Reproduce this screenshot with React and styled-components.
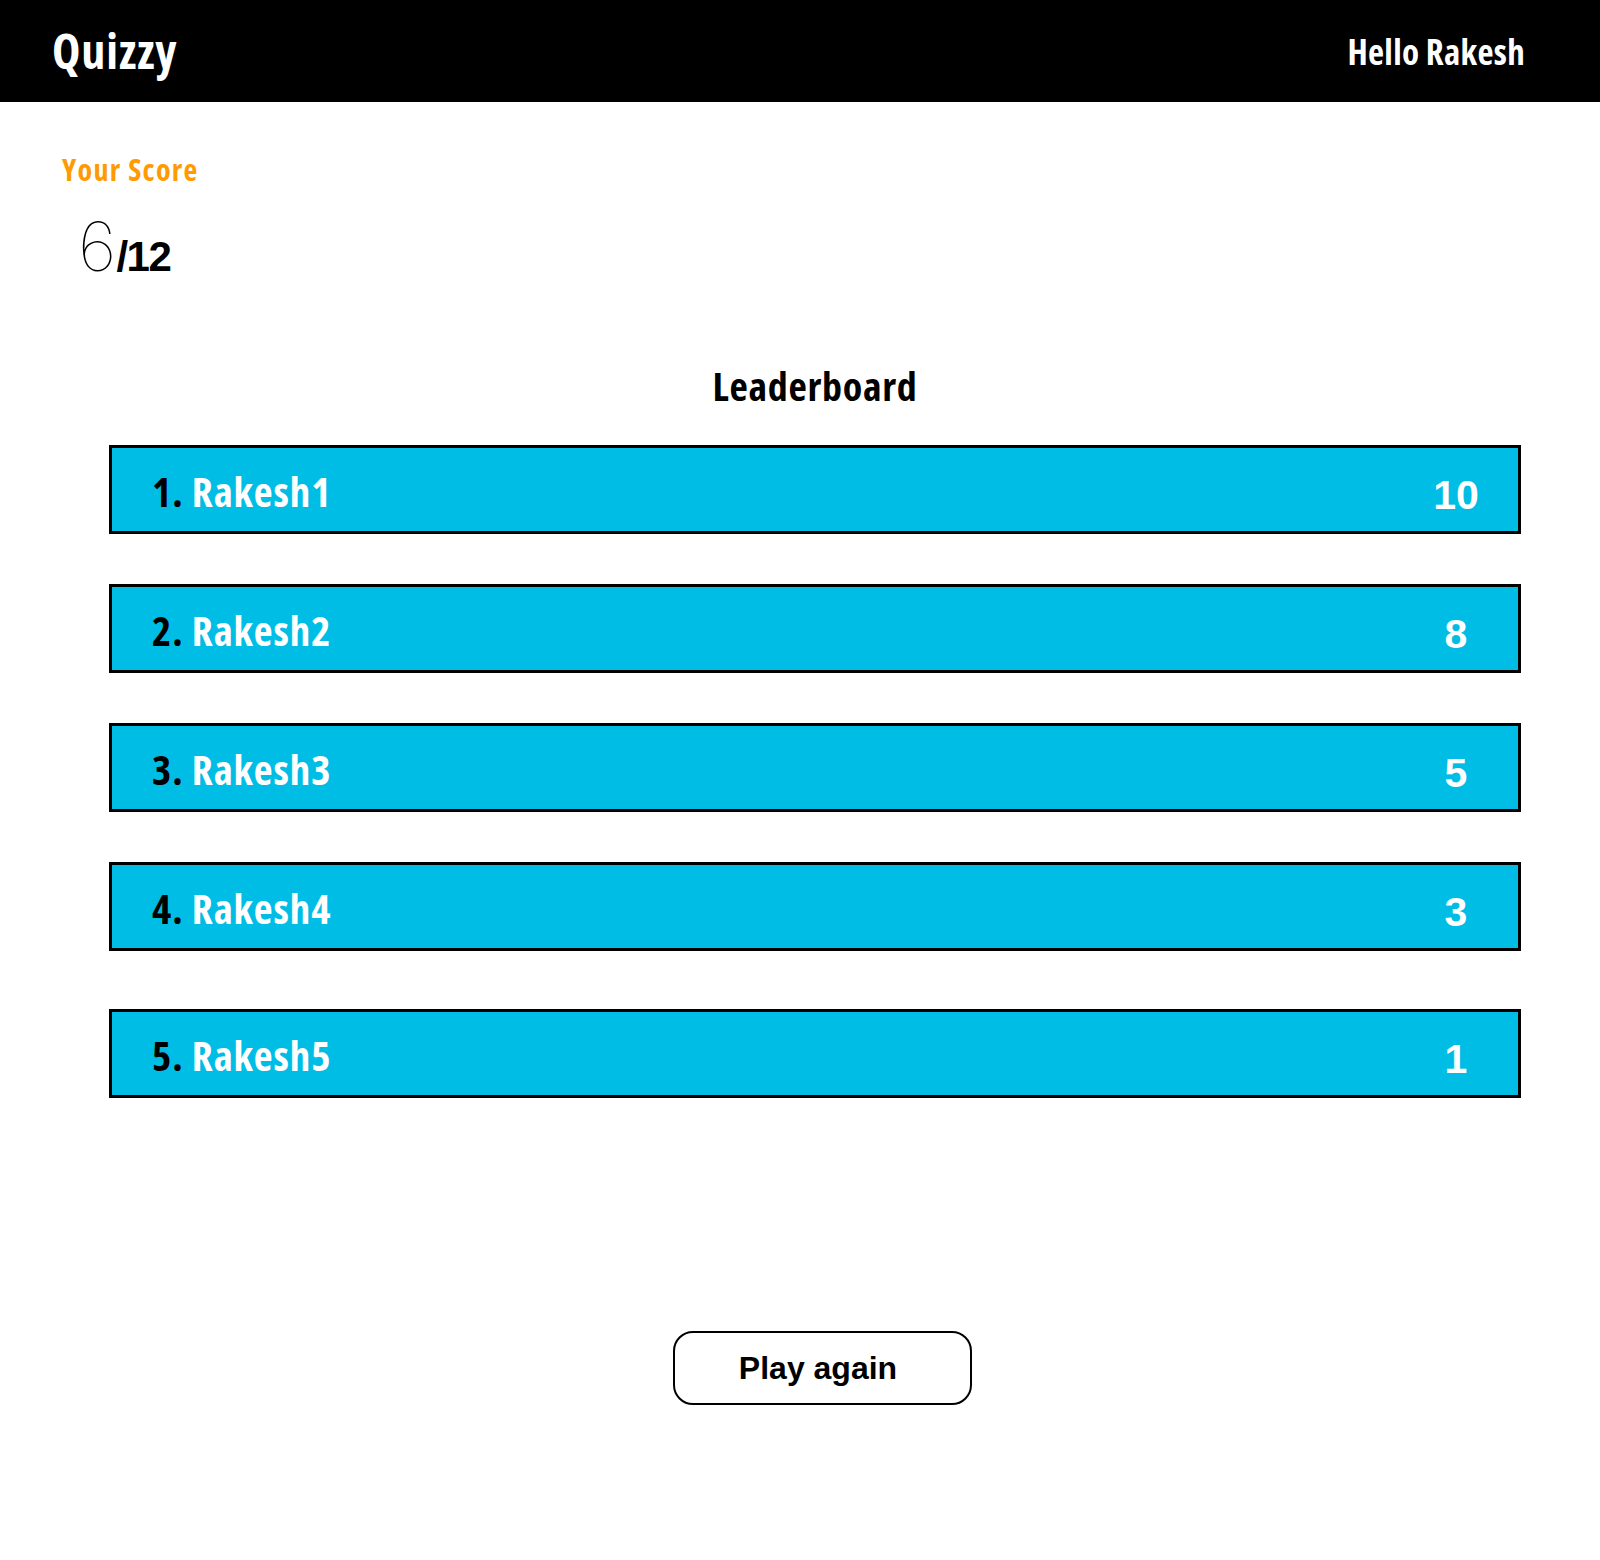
import React from 'react';
import styled, { createGlobalStyle } from 'styled-components';

const GlobalStyle = createGlobalStyle`
  html, body {
    margin: 0;
    padding: 0;
    background: #fff;
  }
  body {
    font-family: "Liberation Sans", Arial, sans-serif;
  }
`;

// narrow bold headline face
const condensed = `"Open Sans", "Liberation Sans", sans-serif`;

const Page = styled.div`
  width: 1600px;
  min-height: 1560px;
  background: #fff;
`;

const Header = styled.header`
  height: 102px;
  background: #000;
  display: flex;
  align-items: center;
  justify-content: space-between;
  padding: 0 75px 0 52px;
  box-sizing: border-box;
`;

const Logo = styled.h1`
  margin: 0;
  font-family: ${condensed};
  font-stretch: 75%;
  font-weight: 700;
  font-size: 48px;
  letter-spacing: 0.9px;
  line-height: 1;
  color: #fff;
`;

const Greeting = styled.div`
  font-family: ${condensed};
  font-stretch: 75%;
  font-weight: 700;
  font-size: 35px;
  letter-spacing: 0.3px;
  line-height: 1;
  color: #fff;
`;

const ScoreSection = styled.section`
  padding: 53px 0 0 62px;
`;

const ScoreLabel = styled.div`
  font-family: ${condensed};
  font-stretch: 75%;
  font-weight: 700;
  font-size: 30px;
  letter-spacing: 1.3px;
  line-height: 1;
  color: #ff9a00;
`;

const ScoreValue = styled.div`
  display: flex;
  align-items: baseline;
  margin: 27px 0 0 16px;
  line-height: 1;
`;

const Got = styled.span`
  font-family: Inter, Lato, sans-serif;
  font-weight: 100;
  font-size: 68px;
  color: #000;
`;

const Total = styled.span`
  font-family: "Liberation Sans", Arial, sans-serif;
  font-weight: 700;
  font-size: 42px;
  letter-spacing: -1.5px;
  color: #000;
`;

const Board = styled.section`
  padding: 0 79px 0 109px;
  margin-top: 86px;
`;

const BoardTitle = styled.h2`
  margin: 0 0 39px;
  text-align: center;
  font-family: ${condensed};
  font-stretch: 75%;
  font-weight: 700;
  font-size: 40px;
  letter-spacing: 0.7px;
  line-height: 1;
  color: #000;
`;

const List = styled.ol`
  list-style: none;
  margin: 0;
  padding: 0;
  display: flex;
  flex-direction: column;
  gap: 50px;
`;

const Row = styled.li`
  height: 89px;
  box-sizing: border-box;
  border: 3px solid #000;
  background: #00bde5;
  display: flex;
  align-items: center;
  justify-content: space-between;
  padding: 0 27px 0 40px;
  margin-top: ${(p) => (p.$extra ? `${p.$extra}px` : 0)};
`;

const Player = styled.div`
  margin-top: 4px;
  font-family: ${condensed};
  font-stretch: 75%;
  font-weight: 700;
  font-size: 41px;
  letter-spacing: 0.9px;
  line-height: 1;
  color: #fff;
`;

const Rank = styled.span`
  color: #000;
`;

const Points = styled.span`
  width: 70px;
  margin-top: 11px;
  text-align: center;
  font-family: "Liberation Sans", Arial, sans-serif;
  font-weight: 700;
  font-size: 41px;
  line-height: 1;
  color: #fff;
`;

const ButtonRow = styled.div`
  display: flex;
  justify-content: center;
  padding-left: 45px;
  margin-top: 233px;
`;

const PlayButton = styled.button`
  width: 299px;
  height: 74px;
  box-sizing: border-box;
  border: 2.5px solid #000;
  border-radius: 20px;
  background: #fff;
  padding: 0 9px 0 0;
  font-family: "Liberation Sans", Arial, sans-serif;
  font-weight: 700;
  font-size: 32px;
  color: #000;
  cursor: pointer;
`;

const leaders = [
  { name: 'Rakesh1', score: 10 },
  { name: 'Rakesh2', score: 8 },
  { name: 'Rakesh3', score: 5 },
  { name: 'Rakesh4', score: 3 },
  { name: 'Rakesh5', score: 1 },
];

const App = () => {
  return (
    <Page>
      <GlobalStyle />
      <Header>
        <Logo>Quizzy</Logo>
        <Greeting>Hello Rakesh</Greeting>
      </Header>

      <ScoreSection>
        <ScoreLabel>Your Score</ScoreLabel>
        <ScoreValue>
          <Got>6</Got>
          <Total>/12</Total>
        </ScoreValue>
      </ScoreSection>

      <Board>
        <BoardTitle>Leaderboard</BoardTitle>
        <List>
          {leaders.map((l, i) => (
            <Row key={l.name} $extra={i === 4 ? 8 : 0}>
              <Player>
                <Rank>{i + 1}. </Rank>
                {l.name}
              </Player>
              <Points>{l.score}</Points>
            </Row>
          ))}
        </List>
      </Board>

      <ButtonRow>
        <PlayButton>Play again</PlayButton>
      </ButtonRow>
    </Page>
  );
};

export default App;
